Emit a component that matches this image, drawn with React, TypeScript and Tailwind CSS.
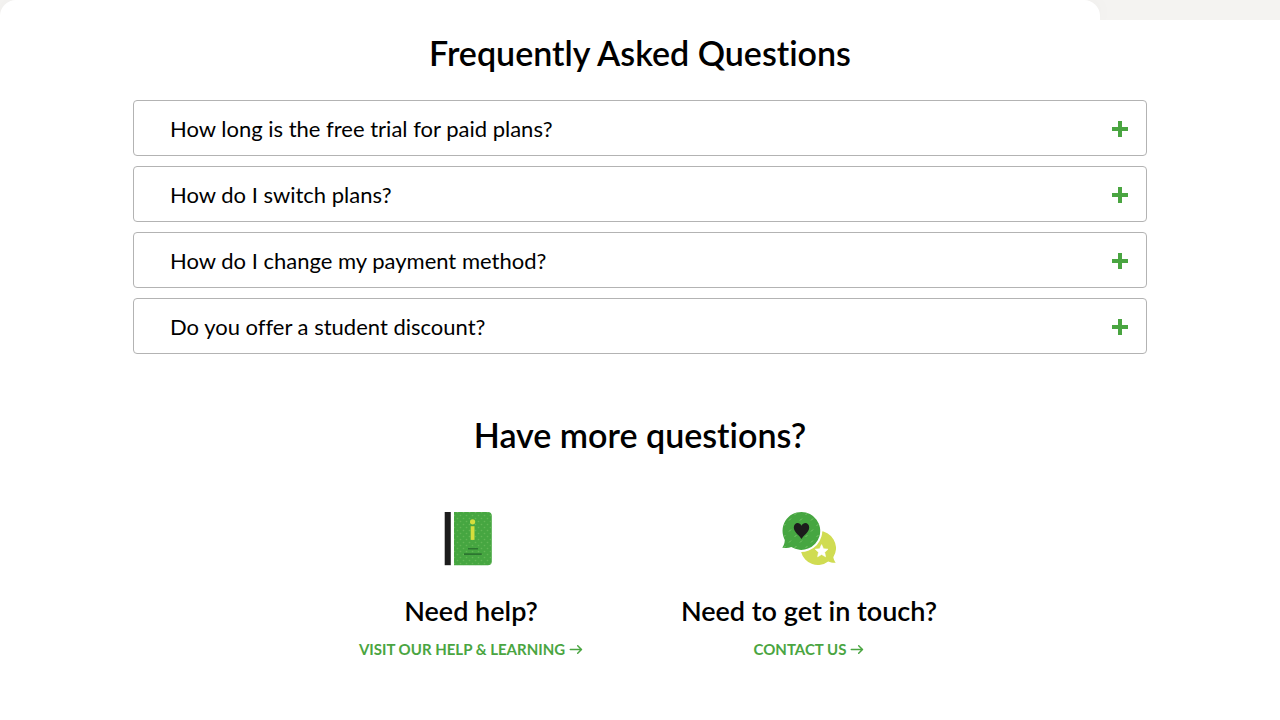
import { useState } from 'react';

const questions = [
  {
    q: 'How long is the free trial for paid plans?',
    a: 'You can try any paid plan before you are billed.',
  },
  { q: 'How do I switch plans?', a: 'Switch plans at any time from your account settings.' },
  {
    q: 'How do I change my payment method?',
    a: 'Update your payment method from the billing page of your account.',
  },
  { q: 'Do you offer a student discount?', a: 'Get in touch and we will go over the options for students.' },
];

function PlusIcon() {
  return (
    <svg className="size-4 shrink-0" viewBox="0 0 16 16" fill="#4aa541" aria-hidden="true">
      <path d="M6 0h4v6h6v4h-6v6H6v-6H0V6h6z" />
    </svg>
  );
}

function ArrowIcon() {
  return (
    <svg
      className="h-3 w-[14px]"
      viewBox="0 0 14 12"
      fill="none"
      stroke="currentColor"
      strokeWidth="1.5"
      strokeLinecap="round"
      strokeLinejoin="round"
      aria-hidden="true"
    >
      <path d="M1.3 6.5h11M8.7 2.8l3.8 3.7-3.8 3.7" />
    </svg>
  );
}

function BookIcon() {
  return (
    <svg className="h-[55px] w-[54px]" viewBox="0 0 54 55" aria-hidden="true">
      <defs>
        <pattern id="book-dots" width="6" height="6" patternUnits="userSpaceOnUse">
          <circle cx="1.5" cy="1.5" r="0.8" fill="#62b655" />
          <circle cx="4.5" cy="4.5" r="0.8" fill="#62b655" />
        </pattern>
      </defs>
      <path d="M.7 1h6.1v53.2H.7z" fill="#1c1c1c" />
      <path d="M10 1h33.8a4 4 0 0 1 4 4v45.2a4 4 0 0 1-4 4H10z" fill="#46a641" />
      <path d="M10 1h33.8a4 4 0 0 1 4 4v45.2a4 4 0 0 1-4 4H10z" fill="url(#book-dots)" />
      <circle cx="28.6" cy="10.8" r="2.6" fill="#d5de3c" />
      <path d="M26.7 15.2h3.8v13.7h-3.8z" fill="#d5de3c" />
      <path d="M24 37.8h10M20 43.1h17.8" stroke="#2c7530" strokeWidth="1.6" />
    </svg>
  );
}

function ChatIcon() {
  return (
    <svg className="h-[55px] w-[54px]" viewBox="0 0 54 55" aria-hidden="true">
      <defs>
        <pattern id="chat-dashes" width="11" height="11" patternUnits="userSpaceOnUse">
          <path d="M1.5 4l2-2M7 9.5l2-2" stroke="#7cc66d" strokeWidth="0.9" />
        </pattern>
      </defs>
      <path
        d="M36.2 20A17.2 17.2 0 0 1 51.3 46.2C51.7 48.3 52.6 50 53.7 51.8C51 52 48.6 51.5 46.2 50.5A17.2 17.2 0 0 1 19.2 41.2z"
        fill="#d0dc52"
      />
      <path
        d="M19.6.9A19 19 0 1 1 9.3 36.1C6.7 37.2 3.6 37.2.3 36.7C1.8 34.5 2.7 32 2.8 28.9A19 19 0 0 1 19.6.9z"
        fill="#fff"
        stroke="#fff"
        strokeWidth="4"
      />
      <path
        d="M19.6.9A19 19 0 1 1 9.3 36.1C6.7 37.2 3.6 37.2.3 36.7C1.8 34.5 2.7 32 2.8 28.9A19 19 0 0 1 19.6.9z"
        fill="#46a641"
      />
      <path
        d="M19.6.9A19 19 0 1 1 9.3 36.1C6.7 37.2 3.6 37.2.3 36.7C1.8 34.5 2.7 32 2.8 28.9A19 19 0 0 1 19.6.9z"
        fill="url(#chat-dashes)"
      />
      <path
        d="M19.5 28C17.6 24.2 11.8 21.2 11.8 16.4C11.8 11.3 17.6 10.4 19.5 14.8C21.4 10.4 27.2 11.3 27.2 16.4C27.2 21.2 21.4 24.2 19.5 28z"
        fill="#1c1c1c"
      />
      <path
        d="M39.6 33.6l1.9 4.1 4.5.5-3.3 3.1.9 4.5-4-2.3-4 2.3.9-4.5-3.3-3.1 4.5-.5z"
        fill="#fff"
        stroke="#fff"
        strokeWidth="0.6"
        strokeLinejoin="round"
      />
    </svg>
  );
}

export default function App() {
  const [open, setOpen] = useState<number | null>(null);

  return (
    <div className="min-h-screen bg-white font-['Lato',sans-serif] text-black [font-variant-ligatures:none]">
      <div className="overflow-hidden bg-[#f4f3f1]">
        <div className="mr-[180px] h-5 rounded-t-[16px] bg-white shadow-[0_0_20px_rgba(0,0,0,0.03)]" />
      </div>

      <main className="mx-auto max-w-[1046px] px-4 pb-14">
        <section className="pt-[13px]">
          <h2 className="text-center text-[34px] leading-10 font-semibold">Frequently Asked Questions</h2>
          <ul className="mt-[27px] flex flex-col gap-[10px]">
            {questions.map((item, i) => (
              <li key={item.q} className="rounded-[4px] border border-[#b3b3b3]">
                <button
                  type="button"
                  aria-expanded={open === i}
                  onClick={() => setOpen(open === i ? null : i)}
                  className="flex w-full cursor-pointer items-center justify-between pt-3 pr-[18px] pb-[10px] pl-9 text-left text-[22px] leading-8"
                >
                  {item.q}
                  <PlusIcon />
                </button>
                {open === i && <p className="px-9 pb-4 text-lg">{item.a}</p>}
              </li>
            ))}
          </ul>
        </section>

        <section className="pt-[61px]">
          <h2 className="text-center text-[34px] leading-10 font-semibold">Have more questions?</h2>
          <div className="mx-auto mt-14 grid w-2/3 grid-cols-2">
            <div className="flex flex-col items-center">
              <BookIcon />
              <h3 className="mt-[29px] text-[27px] leading-8 font-semibold whitespace-nowrap">Need help?</h3>
              <a
                href="#help"
                className="mt-3 flex items-center gap-1 text-[15px] leading-5 font-bold whitespace-nowrap text-[#4aa541] uppercase"
              >
                Visit our help &amp; learning
                <ArrowIcon />
              </a>
            </div>
            <div className="flex flex-col items-center">
              <ChatIcon />
              <h3 className="mt-[29px] text-[27px] leading-8 font-semibold whitespace-nowrap">
                Need to get in touch?
              </h3>
              <a
                href="#contact"
                className="mt-3 flex items-center gap-1 text-[15px] leading-5 font-bold whitespace-nowrap text-[#4aa541] uppercase"
              >
                Contact us
                <ArrowIcon />
              </a>
            </div>
          </div>
        </section>
      </main>
    </div>
  );
}
